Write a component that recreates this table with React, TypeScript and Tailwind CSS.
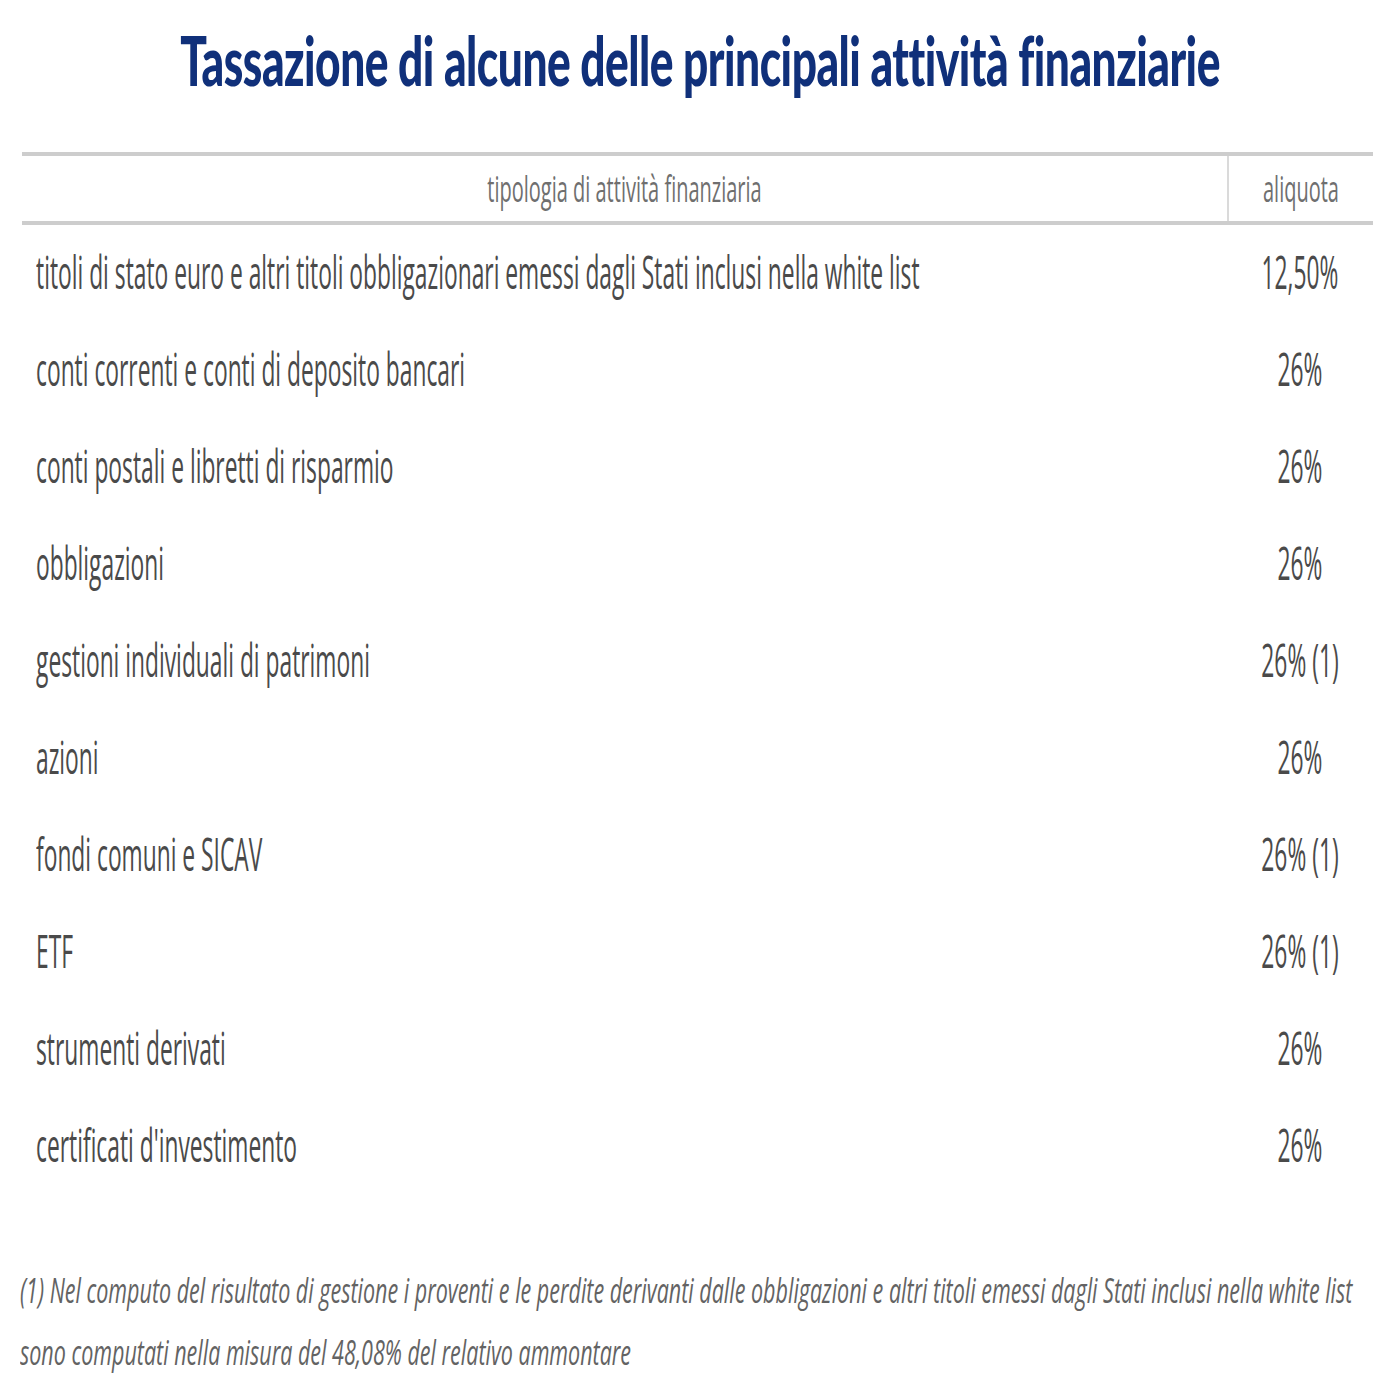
import React from 'react'

type Row = { label: string; rate: string }

const rows: Row[] = [
  { label: 'titoli di stato euro e altri titoli obbligazionari emessi dagli Stati inclusi nella white list', rate: '12,50%' },
  { label: 'conti correnti e conti di deposito bancari', rate: '26%' },
  { label: 'conti postali e libretti di risparmio', rate: '26%' },
  { label: 'obbligazioni', rate: '26%' },
  { label: 'gestioni individuali di patrimoni', rate: '26% (1)' },
  { label: 'azioni', rate: '26%' },
  { label: 'fondi comuni e SICAV', rate: '26% (1)' },
  { label: 'ETF', rate: '26% (1)' },
  { label: 'strumenti derivati', rate: '26%' },
  { label: "certificati d'investimento", rate: '26%' },
]

// the screenshot is squashed sideways, so text is stretched upward
function Tall({ children, className = '' }: { children: React.ReactNode; className?: string }) {
  return <span className={`inline-block origin-center whitespace-nowrap ${className}`}>{children}</span>
}

export default function App() {
  return (
    <div className="w-[1400px] h-[1400px] bg-white font-['Open_Sans',sans-serif] overflow-hidden">
      <div className="h-[118px] flex items-center justify-center">
        <h1 className="font-['Lato',sans-serif] font-black text-[44.3px] leading-[50px] text-[#10307a] tracking-[-0.5px]">
          <Tall className="scale-y-[1.56]">Tassazione di alcune delle principali attività finanziarie</Tall>
        </h1>
      </div>

      <div className="mt-[34px] mx-[22px] w-[1351px]">
        <div className="grid grid-cols-[1205px_146px] border-y-4 border-[#cdcdcd] h-[73px]">
          <div className="flex items-center justify-center text-[20px] text-[#6f6f6f]">
            <Tall className="scale-y-[1.8]">tipologia di attività finanziaria</Tall>
          </div>
          <div className="flex items-center justify-center border-l-2 border-[#dadada] text-[20px] text-[#6f6f6f]">
            <Tall className="scale-y-[1.8]">aliquota</Tall>
          </div>
        </div>

        {rows.map((r) => (
          <div key={r.label} className="grid grid-cols-[1205px_146px] h-[97px] text-[22.8px] text-[#4a4a4a]">
            <div className="flex items-center pl-[14px]">
              <Tall className="scale-y-[1.97]">{r.label}</Tall>
            </div>
            <div className="flex items-center justify-center">
              <Tall className="scale-y-[1.97]">{r.rate}</Tall>
            </div>
          </div>
        ))}
      </div>

      <div className="mt-[64px] pl-[20px] italic text-[21.5px] text-[#636363]">
        <div className="h-[62px] flex items-center">
          <Tall className="scale-y-[1.6]">(1) Nel computo del risultato di gestione i proventi e le perdite derivanti dalle obbligazioni e altri titoli emessi dagli Stati inclusi nella white list</Tall>
        </div>
        <div className="h-[62px] flex items-center">
          <Tall className="scale-y-[1.6]">sono computati nella misura del 48,08% del relativo ammontare</Tall>
        </div>
      </div>
    </div>
  )
}
